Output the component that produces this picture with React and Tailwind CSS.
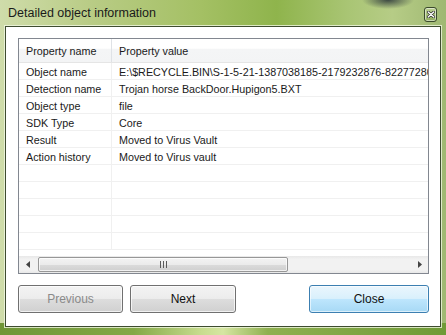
import React from "react";

const rows = [
  ["Object name", "E:\\$RECYCLE.BIN\\S-1-5-21-1387038185-2179232876-8227728004-1000\\$R2F9XAB.exe"],
  ["Detection name", "Trojan horse BackDoor.Hupigon5.BXT"],
  ["Object type", "file"],
  ["SDK Type", "Core"],
  ["Result", "Moved to Virus Vault"],
  ["Action history", "Moved to Virus vault"],
  ["", ""],
  ["", ""],
  ["", ""],
  ["", ""],
  ["", ""],
];

export default function App() {
  return (
    <div
      className="relative w-[446px] h-[335px] overflow-hidden flex flex-col"
      style={{ fontFamily: '"Liberation Sans", Arial, sans-serif' }}
    >
      {/* glass frame background */}
      <div className="absolute inset-0 bg-[linear-gradient(90deg,#cfdcaa_0%,#b9cc86_20%,#a4c064_45%,#8fb44c_62%,#a9c574_78%,#b6cc86_88%,#9fb872_100%)]" />
      <div className="absolute inset-0 bg-[radial-gradient(ellipse_26px_9px_at_388px_0px,rgba(30,40,50,0.8),rgba(30,40,50,0)_100%)]" />
      <div className="absolute left-0 right-0 bottom-0 h-[12px] bg-[linear-gradient(90deg,#6f9636_0%,#84a846_30%,#c7dc8e_45%,#d6e6a2_50%,#8fb050_60%,#6f9a36_100%)]" />

      {/* title bar */}
      <div className="relative h-[26px] flex items-center pl-[8px] shrink-0">
        <span className="text-[12.5px] text-[#1a1a1a] leading-none">Detailed object information</span>
        <div className="absolute left-[424px] top-[7px] w-[13px] h-[15px] rounded-[3px] border border-[#3b4a2c] bg-[linear-gradient(180deg,rgba(190,210,150,0.9),rgba(140,170,90,0.9))] shadow-[inset_0_0_0_1px_rgba(255,255,255,0.5)] flex items-center justify-center">
          <svg width="8" height="7" viewBox="0 0 8 7">
            <path d="M1.2 1 L6.8 6 M6.8 1 L1.2 6" stroke="#2a2a2a" strokeWidth="2.8" strokeLinecap="round" />
            <path d="M1.2 1 L6.8 6 M6.8 1 L1.2 6" stroke="#ffffff" strokeWidth="1.4" strokeLinecap="round" />
          </svg>
        </div>
      </div>

      {/* client area */}
      <div className="relative mx-[5px] w-[436px] h-[301px] bg-white border border-[#3e4c30] shadow-[0_0_0_1px_rgba(240,246,225,0.8)] pt-[11px] pl-[12px] pr-[11px] flex flex-col">
        {/* list view */}
        <div className="w-[411px] h-[236px] border border-[#828790] bg-white flex flex-col overflow-hidden">
          {/* header */}
          <div className="h-[24px] shrink-0 flex text-[10.75px] text-[#1a1a1a] bg-[linear-gradient(180deg,#ffffff_0%,#ffffff_40%,#f4f5f6_45%,#f3f4f5_100%)] border-b border-[#e5e5e5]">
            <div className="w-[93px] border-r border-[#dfe2e6] pl-[7px] pt-[2px] flex items-center">Property name</div>
            <div className="flex-1 pl-[7px] pt-[2px] flex items-center">Property value</div>
          </div>
          {/* rows */}
          <div className="flex-1 overflow-hidden">
            {rows.map((r, i) => (
              <div key={i} className="h-[17px] flex text-[10.75px] text-[#1a1a1a] border-b border-[#f0f0f0]">
                <div className="w-[93px] shrink-0 border-r border-[#f0f0f0] pl-[7px] pt-[2px] flex items-center whitespace-nowrap overflow-hidden">{r[0]}</div>
                <div className="flex-1 min-w-0 pl-[7px] pt-[2px] flex items-center whitespace-nowrap overflow-hidden">{r[1]}</div>
              </div>
            ))}
          </div>
          {/* horizontal scrollbar */}
          <div className="h-[17px] shrink-0 flex items-center bg-[linear-gradient(180deg,#e8e8e8_0%,#f2f2f2_20%,#f2f2f2_80%,#e8e8e8_100%)]">
            <div className="w-[17px] h-[17px] flex items-center justify-center">
              <svg width="4" height="7" viewBox="0 0 4 7"><path d="M4 0 L0 3.5 L4 7 Z" fill="#444" /></svg>
            </div>
            <div className="ml-[2px] w-[250px] h-[15px] rounded-[2px] border border-[#979797] bg-[linear-gradient(180deg,#f3f3f3_0%,#ebebeb_50%,#dbdbdb_51%,#cfcfcf_100%)] shadow-[inset_0_0_0_1px_rgba(255,255,255,0.7)] flex items-center justify-center">
              <svg width="7" height="7" viewBox="0 0 7 7">
                <path d="M0.5 0 V7 M3.5 0 V7 M6.5 0 V7" stroke="#5a5a5a" strokeWidth="1" />
              </svg>
            </div>
            <div className="flex-1" />
            <div className="w-[17px] h-[17px] flex items-center justify-center">
              <svg width="4" height="7" viewBox="0 0 4 7"><path d="M0 0 L4 3.5 L0 7 Z" fill="#444" /></svg>
            </div>
          </div>
        </div>

        {/* buttons */}
        <div className="mt-[11px] flex h-[28px] text-[12px]">
          <button className="w-[105px] h-[28px] rounded-[3px] border border-[#707070] bg-[linear-gradient(180deg,#f3f3f3_0%,#ececec_48%,#dddddd_50%,#d0d0d0_100%)] shadow-[inset_0_0_0_1px_rgba(255,255,255,0.7)] text-[#8a8a8a]">
            Previous
          </button>
          <button className="ml-[7px] w-[106px] h-[28px] rounded-[3px] border border-[#707070] bg-[linear-gradient(180deg,#f3f3f3_0%,#ececec_48%,#dddddd_50%,#d0d0d0_100%)] shadow-[inset_0_0_0_1px_rgba(255,255,255,0.7)] text-[#111]">
            Next
          </button>
          <div className="flex-1" />
          <button className="w-[120px] h-[28px] rounded-[3px] border border-[#3c7fb1] bg-[linear-gradient(180deg,#eaf6fd_0%,#d9f0fc_48%,#bee6fd_50%,#a7d9f5_100%)] shadow-[inset_0_0_0_1px_rgba(255,255,255,0.6)] text-[#111]">
            Close
          </button>
        </div>
      </div>
    </div>
  );
}
